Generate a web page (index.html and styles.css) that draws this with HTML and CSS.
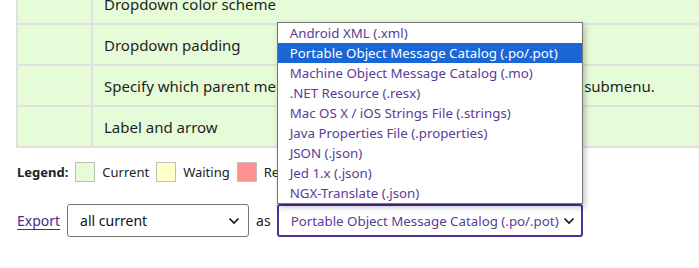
FILE: index.html
```html
<!DOCTYPE html>
<html>
<head>
<meta charset="utf-8">
<link rel="stylesheet" href="styles.css">
</head>
<body>
<div class="page">
  <table class="status">
    <tr><td class="key"></td><td class="desc">Dropdown color scheme</td></tr>
    <tr><td class="key"></td><td class="desc">Dropdown padding</td></tr>
    <tr><td class="key"></td><td class="desc">Specify which parent menu items should be used when creating the submenu.</td></tr>
    <tr><td class="key"></td><td class="desc">Label and arrow</td></tr>
  </table>

  <div class="legend">
    <b class="legend-title">Legend:</b>
    <span class="swatch current"></span><span class="legend-label">Current</span>
    <span class="swatch waiting"></span><span class="legend-label">Waiting</span>
    <span class="swatch rejected"></span><span class="legend-label">Rejected</span>
  </div>

  <div class="export">
    <a class="export-link" href="#">Export</a>
    <div class="select which">
      <span class="select-text">all current</span>
      <svg class="chev" width="12" height="8" viewBox="0 0 12 8"><path d="M1.5 1.5 L6 6 L10.5 1.5" fill="none" stroke="#111" stroke-width="1.6"/></svg>
    </div>
    <span class="as">as</span>
    <div class="format-wrap">
      <div class="select format">
        <span class="select-text">Portable Object Message Catalog (.po/.pot)</span>
        <svg class="chev" width="12" height="8" viewBox="0 0 12 8"><path d="M1.5 1.5 L6 6 L10.5 1.5" fill="none" stroke="#111" stroke-width="1.6"/></svg>
      </div>
      <ul class="popup">
        <li>Android XML (.xml)</li>
        <li class="selected">Portable Object Message Catalog (.po/.pot)</li>
        <li>Machine Object Message Catalog (.mo)</li>
        <li>.NET Resource (.resx)</li>
        <li>Mac OS X / iOS Strings File (.strings)</li>
        <li>Java Properties File (.properties)</li>
        <li>JSON (.json)</li>
        <li>Jed 1.x (.json)</li>
        <li>NGX-Translate (.json)</li>
      </ul>
    </div>
  </div>
</div>
</body>
</html>
```

FILE: styles.css
```css
html, body {
  margin: 0;
  padding: 0;
  background: #fff;
  overflow: hidden;
}
body {
  font-family: "Noto Sans", "Open Sans", sans-serif;
  color: #222;
  width: 699px;
  height: 268px;
}
.page {
  padding-left: 16px;
}
.status {
  border-collapse: collapse;
  width: 760px;
  margin-top: -18px;
  border: 2px solid #c8c8c8;
  background: #e6fcd9;
}
.status td {
  border: 2px solid #e0e0e0;
  height: 39px;
  padding: 0 11px;
  font-size: 15px;
  color: #1e1e1e;
  white-space: nowrap;
}
.status td.key {
  width: 51px;
}
.legend {
  display: flex;
  align-items: center;
  height: 20px;
  margin-top: 14px;
  font-size: 13px;
}
.legend-title {
  font-weight: bold;
  margin-right: 7px;
  margin-left: 1px;
}
.swatch {
  width: 18px;
  height: 18px;
  border: 1px solid #bdbdbd;
  margin-right: 7px;
}
.swatch.current { background: #e6fcd9; }
.swatch.waiting { background: #ffffc8; }
.swatch.rejected { background: #ff9191; }
.legend-label {
  margin-right: 7px;
}
.export {
  display: flex;
  align-items: center;
  margin-top: 22px;
  font-size: 14px;
}
.export-link {
  color: #4b2a8c;
  text-decoration: underline;
  text-underline-offset: 3px;
  margin-left: 1px;
  margin-right: 7px;
}
.select {
  box-sizing: border-box;
  height: 33px;
  display: flex;
  align-items: center;
  justify-content: space-between;
  border: 1px solid #767676;
  border-radius: 3px;
  padding: 0 8px 0 12px;
  background: #fff;
  white-space: nowrap;
}
.which {
  width: 182px;
  color: #111;
  font-size: 14px;
}
.as {
  margin: 0 6px 0 7px;
}
.format-wrap {
  position: relative;
}
.format {
  width: 306px;
  border: 2px solid #4d2f97;
  padding-left: 12px;
  padding-right: 6px;
  color: #5a3c96;
  font-size: 13.3px;
}
.popup {
  position: absolute;
  left: 0;
  bottom: 33px;
  width: 306px;
  box-sizing: border-box;
  margin: 0;
  padding: 0;
  list-style: none;
  background: #fff;
  border: 1px solid #767676;
  box-shadow: 2px 3px 6px rgba(0, 0, 0, 0.25);
  font-size: 13.3px;
  color: #5a3c96;
}
.popup li {
  height: 20px;
  line-height: 20px;
  padding-left: 12px;
  white-space: nowrap;
}
.popup li.selected {
  background: #1a66d4;
  color: #fff;
}
```
